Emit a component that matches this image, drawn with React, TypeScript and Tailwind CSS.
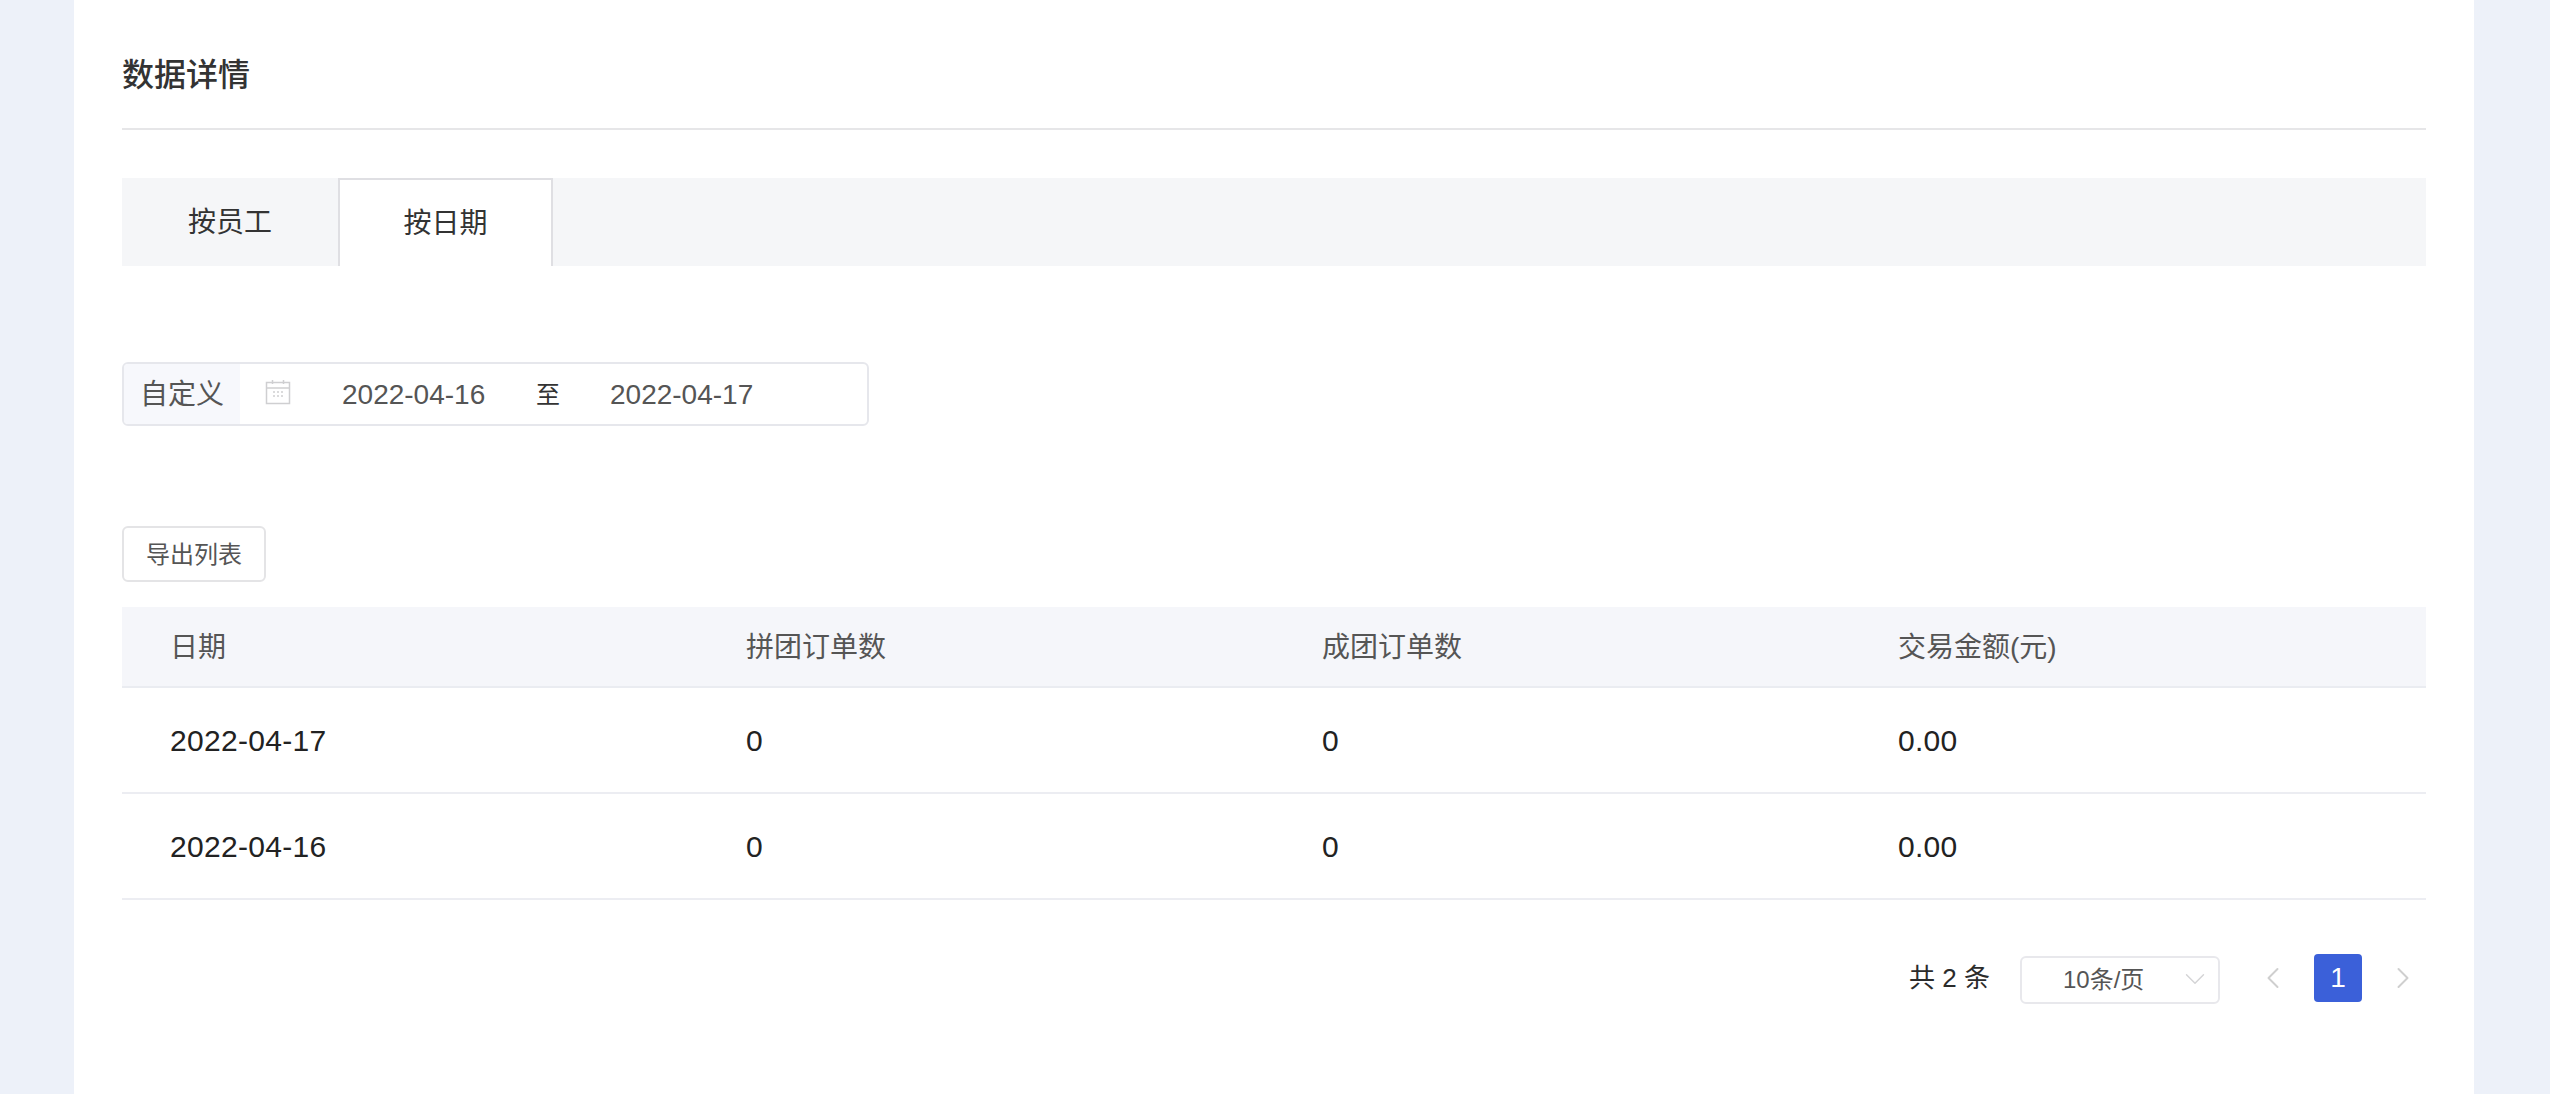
import { ChevronLeft, ChevronRight, ChevronDown } from "lucide-react";

const rows = [
  { date: "2022-04-17", group: "0", done: "0", amount: "0.00" },
  { date: "2022-04-16", group: "0", done: "0", amount: "0.00" },
];

const CalendarIcon = () => (
  <svg width="26" height="26" viewBox="0 0 26 26" fill="none" stroke="#cfcfd1" strokeWidth="1.5">
    <rect x="1.5" y="3.5" width="23" height="21" />
    <path d="M1.5 9h23M7.5 1v4M18.5 1v4" />
    <path d="M8 13h2M12 13h2M16 13h2M8 17h2M12 17h2M16 17h2" />
  </svg>
);

export default function App() {
  return (
    <div
      className="h-screen overflow-hidden bg-[#edf1f9] pl-[74px] pr-[76px] text-[28px]"
      style={{ fontFamily: '"Liberation Sans", "Noto Sans CJK SC", sans-serif' }}
    >
      <div className="h-full bg-white px-[48px]">
        <div className="flex h-[130px] items-center border-b-2 border-[#e6e6e8] pt-[22px]">
          <h2 className="text-[32px] font-medium text-[#333]">数据详情</h2>
        </div>

        <div className="mt-[48px] flex h-[88px] bg-[#f5f6f8] text-[#333]">
          <div className="flex w-[216px] items-center justify-center pt-[2px]">按员工</div>
          <div className="flex w-[215px] items-center justify-center border-x-2 border-t-2 border-[#dfdfe3] bg-white pt-[2px]">
            按日期
          </div>
        </div>

        <div className="mt-[96px] flex h-[64px] w-[747px] items-center overflow-hidden whitespace-nowrap rounded-[6px] border-2 border-[#e6e7ec] text-[#555]">
          <div className="flex h-full w-[116px] items-center justify-center bg-[#f7f8fc] pt-[2px]">自定义</div>
          <div className="mb-[5px] ml-[25px]">
            <CalendarIcon />
          </div>
          <span className="ml-[51px] w-[143px] pt-[2px]">2022-04-16</span>
          <span className="ml-[51px] pt-[2px] text-[24px] text-[#333]">至</span>
          <span className="ml-[50px] pt-[2px]">2022-04-17</span>
        </div>

        <button className="mt-[100px] block h-[56px] w-[144px] rounded-[6px] border-2 border-[#e4e4e6] pt-[2px] text-[24px] text-[#555]">
          导出列表
        </button>

        <div className="mt-[25px]">
          <div className="grid h-[81px] grid-cols-4 items-center border-b-2 border-[#eaecf1] bg-[#f5f6fa] pt-[2px] text-[#555]">
            <div className="pl-[48px]">日期</div>
            <div className="pl-[48px]">拼团订单数</div>
            <div className="pl-[48px]">成团订单数</div>
            <div className="pl-[48px]">交易金额(元)</div>
          </div>
          {rows.map((row) => (
            <div
              key={row.date}
              className="grid h-[106px] grid-cols-4 items-center border-b-2 border-[#ecedf2] text-[30px] tracking-[0.3px] text-[#222]"
            >
              <div className="pl-[48px]">{row.date}</div>
              <div className="pl-[48px]">{row.group}</div>
              <div className="pl-[48px]">{row.done}</div>
              <div className="pl-[48px]">{row.amount}</div>
            </div>
          ))}
        </div>

        <div className="mt-[52px] flex items-center justify-end pr-[5px]">
          <span className="mr-[30px] text-[26px] text-[#2b2b2b]">共 2 条</span>
          <div className="relative mr-[35px] mt-[4px] flex h-[48px] w-[200px] items-center rounded-[6px] border-2 border-[#e8e8ec] pl-[41px] text-[24px] text-[#555]">
            10条/页
            <ChevronDown className="absolute right-[6px] top-[4px] size-[34px] text-[#d4d4d6]" strokeWidth={1} />
          </div>
          <ChevronLeft className="mr-[23px] size-[36px] text-[#cfcfcf]" strokeWidth={1.33} />
          <div className="flex size-[48px] items-center justify-center rounded-[4px] bg-[#3b60d9] text-white">1</div>
          <ChevronRight className="ml-[23px] size-[36px] text-[#cfcfcf]" strokeWidth={1.33} />
        </div>
      </div>
    </div>
  );
}
